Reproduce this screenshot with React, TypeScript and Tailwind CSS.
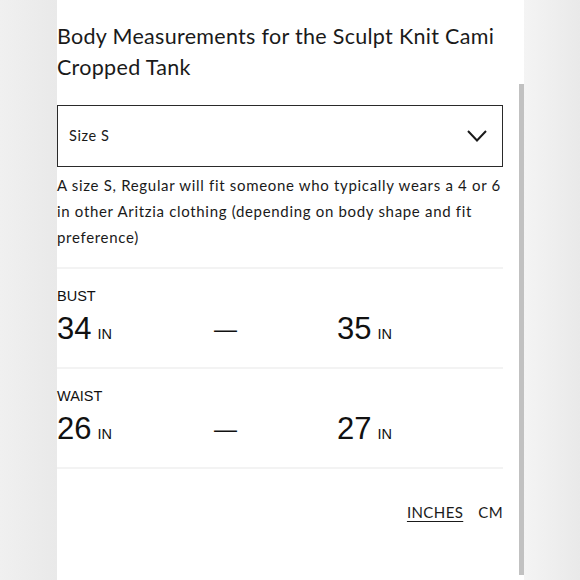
import React from "react";

const geo = { fontFamily: "Lato, 'Noto Sans', sans-serif" };
const helv = { fontFamily: "'Liberation Sans', Arial, sans-serif" };

function Row({ label, a, b }: { label: string; a: string; b: string }) {
  return (
    <div className="pt-[19px] pb-[21px]">
      <div className="text-[14.5px] leading-[16px] text-[#111]" style={helv}>
        {label}
      </div>
      <div className="mt-[8px] grid h-[34px] grid-cols-[157px_123px_1fr] items-center text-[#111]" style={helv}>
        <div className="text-[31px] leading-[34px] whitespace-nowrap">
          <span>{a}</span>
          <span className="ml-[6px] text-[14.5px] leading-none">IN</span>
        </div>
        <div className="text-[23px] leading-[23px]">—</div>
        <div className="text-[31px] leading-[34px] whitespace-nowrap">
          <span>{b}</span>
          <span className="ml-[6px] text-[14.5px] leading-none">IN</span>
        </div>
      </div>
    </div>
  );
}

export default function App() {
  return (
    <div className="flex h-[580px] w-[580px] overflow-hidden bg-white">
      <div className="w-[57px] bg-gradient-to-r from-[#f0f0f0] to-[#e9e9e9]" />
      <div className="w-[462px] bg-white pr-[16px] text-[#1a1a1a]" style={geo}>
        <h1 className="pt-[21px] text-[21.5px] leading-[31px] font-normal tracking-[0.3px]">
          Body Measurements for the Sculpt Knit Cami Cropped Tank
        </h1>
        <div className="mt-[22px] flex h-[62px] items-center justify-between border-[1.5px] border-[#2a2a2a] pl-[11px] pr-[15px]">
          <span className="text-[14.5px] tracking-[0.6px]">Size S</span>
          <svg width="20" height="12" viewBox="0 0 20 12" fill="none">
            <polyline points="1,1 10,10.5 19,1" stroke="#1a1a1a" strokeWidth="2" />
          </svg>
        </div>
        <p className="mt-[5px] text-[15px] leading-[26px] tracking-[0.68px]">
          A size S, Regular will fit someone who typically wears a 4 or 6 in other Aritzia clothing (depending on body shape and fit preference)
        </p>
        <div className="mt-[17px] h-[2px] bg-[#f3f3f3]" />
        <Row label="BUST" a="34" b="35" />
        <div className="h-[2px] bg-[#f3f3f3]" />
        <Row label="WAIST" a="26" b="27" />
        <div className="h-[2px] bg-[#f3f3f3]" />
        <div className="mt-[33px] flex justify-end gap-[15px] text-[15px] leading-[20px] tracking-[0.4px]">
          <span className="underline underline-offset-[3px]">INCHES</span>
          <span>CM</span>
        </div>
      </div>
      <div className="flex w-[5px] flex-col bg-white">
        <div className="h-[84px]" />
        <div className="flex-1 bg-[#c1c1c1]" />
        <div className="h-[5px]" />
      </div>
      <div className="flex-1 bg-gradient-to-r from-[#f4f4f4] to-[#e9e9e9]" />
    </div>
  );
}
